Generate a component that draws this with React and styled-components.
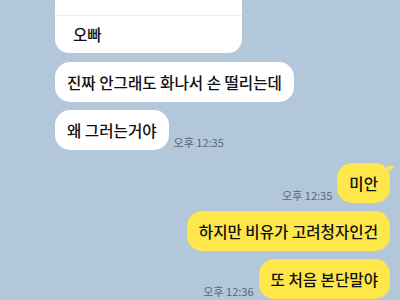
import React from "react";
import styled, { createGlobalStyle } from "styled-components";

const Global = createGlobalStyle`
  html, body {
    margin: 0;
    padding: 0;
    background: #b2c7d9;
  }
  body {
    font-family: "Noto Sans CJK KR", "Noto Sans", sans-serif;
  }
`;

const Screen = styled.div`
  width: 400px;
  height: 300px;
  overflow: hidden;
  background: #b2c7d9;
  display: flex;
  flex-direction: column;
`;

const Row = styled.div`
  display: flex;
  align-items: flex-end;
  justify-content: ${(props) => (props.mine ? "flex-end" : "flex-start")};
  gap: 5px;
  padding: ${(props) => (props.mine ? "0 10px 0 0" : "0 0 0 55px")};
  margin-top: ${(props) => props.top || "8px"};
`;

const Card = styled.div`
  width: 187px;
  background: #fff;
  border-radius: 0 0 14px 14px;
  display: flex;
  flex-direction: column;
`;

const CardHead = styled.div`
  height: 15px;
  border-bottom: 1px solid #ececec;
`;

const CardItem = styled.div`
  padding: 8px 18px 9px;
  font-size: 15.6px;
  font-weight: 500;
  line-height: 20px;
  color: #111;
`;

const Bubble = styled.div`
  position: relative;
  background: ${(props) => (props.mine ? "#fde74b" : "#fff")};
  color: #111;
  font-size: 15.6px;
  font-weight: 500;
  line-height: 20px;
  padding: 10px 12px 10px 12px;
  border-radius: 15px;
  white-space: nowrap;

  ${(props) =>
    props.tail &&
    `
    &::after {
      content: "";
      position: absolute;
      top: 3px;
      right: -5px;
      width: 0;
      height: 0;
      border-top: 7px solid #fde74b;
      border-right: 8px solid transparent;
    }
  `}
`;

const Time = styled.span`
  font-size: 11px;
  line-height: 14px;
  color: #5a6674;
  margin-bottom: 1px;
  white-space: nowrap;
`;

export default function App() {
  return (
    <Screen>
      <Global />
      <Row top="0">
        <Card>
          <CardHead />
          <CardItem>오빠</CardItem>
        </Card>
      </Row>
      <Row top="9px">
        <Bubble>진짜 안그래도 화나서 손 떨리는데</Bubble>
      </Row>
      <Row>
        <Bubble>왜 그러는거야</Bubble>
        <Time>오후 12:35</Time>
      </Row>
      <Row mine top="13px">
        <Time>오후 12:35</Time>
        <Bubble mine tail>미안</Bubble>
      </Row>
      <Row mine>
        <Bubble mine>하지만 비유가 고려청자인건</Bubble>
      </Row>
      <Row mine>
        <Time>오후 12:36</Time>
        <Bubble mine>또 처음 본단말야</Bubble>
      </Row>
    </Screen>
  );
}
